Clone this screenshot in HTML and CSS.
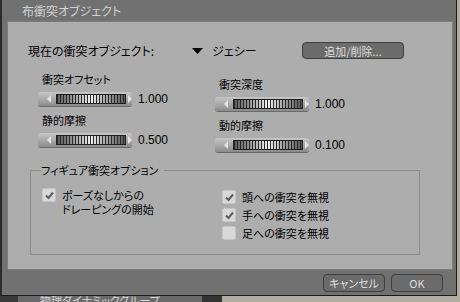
FILE: index.html
```html
<!DOCTYPE html>
<html lang="ja">
<head>
    <meta charset="UTF-8">
    <title>布衝突オブジェクト</title>
    <link rel="stylesheet" href="styles.css">
</head>
<body>
    <div class="window">
        <div class="titlebar">布衝突オブジェクト</div>
        <div class="panel">
            <div class="top-row">
                <span class="current-label">現在の衝突オブジェクト:</span>
                <span class="picker">
                    <svg class="arrow-down" width="11" height="6" viewBox="0 0 11 6"><polygon points="0,0 11,0 5.5,6" fill="#000"/></svg>
                    <span>ジェシー</span>
                </span>
                <button class="btn btn-add">追加/削除...</button>
            </div>

            <div class="params">
                <div class="param-col">
                    <div class="param">
                        <div class="param-label">衝突オフセット</div>
                        <div class="param-row">
                            <div class="slider"><span class="cap-left"></span><span class="track"></span><span class="cap-right"></span></div>
                            <span class="param-value">1.000</span>
                        </div>
                    </div>
                    <div class="param">
                        <div class="param-label">静的摩擦</div>
                        <div class="param-row">
                            <div class="slider"><span class="cap-left"></span><span class="track"></span><span class="cap-right"></span></div>
                            <span class="param-value">0.500</span>
                        </div>
                    </div>
                </div>
                <div class="param-col right">
                    <div class="param">
                        <div class="param-label">衝突深度</div>
                        <div class="param-row">
                            <div class="slider"><span class="cap-left"></span><span class="track"></span><span class="cap-right"></span></div>
                            <span class="param-value">1.000</span>
                        </div>
                    </div>
                    <div class="param">
                        <div class="param-label">動的摩擦</div>
                        <div class="param-row">
                            <div class="slider"><span class="cap-left"></span><span class="track"></span><span class="cap-right"></span></div>
                            <span class="param-value">0.100</span>
                        </div>
                    </div>
                </div>
            </div>

            <fieldset class="options">
                <legend>フィギュア衝突オプション</legend>
                <div class="options-body">
                    <div class="option-col">
                        <label class="option">
                            <span class="check on"><svg width="11" height="11" viewBox="0 0 11 11"><path d="M2 5.5 L4.5 8 L9 2.5" fill="none" stroke="#5e5e5e" stroke-width="2"/></svg></span>
                            <span class="option-text">ポーズなしからの<br>ドレーピングの開始</span>
                        </label>
                    </div>
                    <div class="option-col right">
                        <label class="option">
                            <span class="check on"><svg width="11" height="11" viewBox="0 0 11 11"><path d="M2 5.5 L4.5 8 L9 2.5" fill="none" stroke="#5e5e5e" stroke-width="2"/></svg></span>
                            <span class="option-text">頭への衝突を無視</span>
                        </label>
                        <label class="option">
                            <span class="check on"><svg width="11" height="11" viewBox="0 0 11 11"><path d="M2 5.5 L4.5 8 L9 2.5" fill="none" stroke="#5e5e5e" stroke-width="2"/></svg></span>
                            <span class="option-text">手への衝突を無視</span>
                        </label>
                        <label class="option">
                            <span class="check"></span>
                            <span class="option-text">足への衝突を無視</span>
                        </label>
                    </div>
                </div>
            </fieldset>
        </div>
        <div class="footer">
            <button class="btn btn-cancel">キャンセル</button>
            <button class="btn btn-ok">OK</button>
        </div>
    </div>
    <div class="under">
        <span class="under-edge"></span>
        <span class="under-title">物理ダイナミックグループ</span>
        <span class="under-block"></span>
    </div>
</body>
</html>
```

FILE: styles.css
```css
body, html {
    margin: 0;
    padding: 0;
}
body {
    width: 460px;
    height: 302px;
    overflow: hidden;
    background-color: #b3ada1;
    font-family: "Noto Sans CJK JP", "Liberation Sans", sans-serif;
    font-size: 11px;
    font-feature-settings: "palt";
    color: #000;
}
.window {
    width: 454px;
    height: 295px;
    background-color: #717171;
    border-left: 2px solid #2a2a2a;
    border-right: 1px solid #1a1a1a;
    border-bottom: 1px solid #1a1a1a;
    display: flex;
    flex-direction: column;
}
.titlebar {
    height: 21px;
    line-height: 21px;
    padding-left: 20px;
    font-size: 12px;
    color: #d2d2d2;
}
.panel {
    margin-left: 5px;
    width: 444px;
    height: 247px;
    background-color: #adadad;
    border: 1px solid #7e7e7e;
}
.top-row {
    display: grid;
    grid-template-columns: 164px 110px 102px;
    align-items: center;
    margin-top: 20px;
    padding-left: 20px;
    height: 17px;
}
.current-label {
    font-size: 12px;
}
.picker {
    display: flex;
    align-items: center;
    gap: 9px;
    font-size: 12px;
}
.btn {
    font-family: "Noto Sans CJK JP", "Liberation Sans", sans-serif;
    font-size: 11px;
    font-feature-settings: "palt";
    color: #dedede;
    background-color: #6b6b6b;
    border: 1px solid #3e3e3e;
    border-radius: 4px;
    padding: 0;
    line-height: 14px;
}
.btn-add {
    height: 17px;
}
.params {
    display: grid;
    grid-template-columns: 177px 177px;
    margin-top: 13px;
    padding-left: 30px;
}
.param-col.right {
    margin-top: 5px;
}
.param {
    margin-bottom: 7px;
}
.param-label {
    line-height: 14px;
    padding-left: 4px;
    margin-bottom: 6px;
}
.param-row {
    display: flex;
    align-items: center;
}
.slider {
    width: 94px;
    height: 14px;
    display: flex;
    align-items: center;
    border-radius: 3px;
    background: linear-gradient(to bottom, #c6c6c6, #a4a4a4 60%, #8a8a8a);
    box-shadow: 0 1px 0 #6a6a6a;
}
.cap-left {
    margin-left: 9px;
    width: 0;
    height: 0;
    border-top: 4px solid transparent;
    border-bottom: 4px solid transparent;
    border-right: 4px solid #e4e4e4;
}
.cap-right {
    margin-left: 2px;
    width: 0;
    height: 0;
    border-top: 4px solid transparent;
    border-bottom: 4px solid transparent;
    border-left: 4px solid #e4e4e4;
}
.track {
    margin-left: 5px;
    width: 68px;
    height: 8px;
    border: 1px solid #1e1e1e;
    background:
        repeating-linear-gradient(to right, #2a2a2a 0 1px, transparent 1px 3px),
        linear-gradient(to right, #5a5a5a, #9a9a9a 25%, #f4f4f4 50%, #9a9a9a 75%, #5a5a5a);
}
.param-value {
    margin-left: 6px;
    font-family: "Liberation Sans Narrow", "Liberation Sans", sans-serif;
    font-size: 12px;
}
.options {
    box-sizing: border-box;
    margin: 4px 0 0 22px;
    width: 390px;
    padding: 11px 0 10px 11px;
    border: 1px solid #8b8b8b;
}
.options legend {
    padding: 0 6px 0 0;
    margin-left: -1px;
    line-height: 14px;
}
.options-body {
    display: grid;
    grid-template-columns: 180px auto;
}
.option-col.right {
    margin-top: 2px;
}
.option {
    display: flex;
    align-items: flex-start;
    gap: 6px;
    height: 18px;
}
.option-col:first-child .option {
    height: auto;
}
.check {
    width: 12px;
    height: 12px;
    border: 1px solid #c6c6c6;
    border-radius: 2px;
    background-color: #d8d8d8;
    display: flex;
    align-items: center;
    justify-content: center;
    flex-shrink: 0;
}
.option-text {
    line-height: 14px;
}
.footer {
    display: flex;
    justify-content: flex-end;
    gap: 6px;
    padding: 4px 13px 0 0;
}
.btn-cancel {
    width: 62px;
    height: 18px;
}
.btn-ok {
    width: 52px;
    height: 18px;
}
.under {
    display: flex;
    height: 6px;
    overflow: hidden;
}
.under-edge {
    width: 18px;
    background-color: #3a3a3a;
}
.under-title {
    width: 162px;
    background-color: #6a6a6a;
    color: #d8d8d8;
    padding-left: 22px;
    line-height: 10px;
    margin-top: -1px;
}
.under-block {
    width: 20px;
    background-color: #333;
}
```
